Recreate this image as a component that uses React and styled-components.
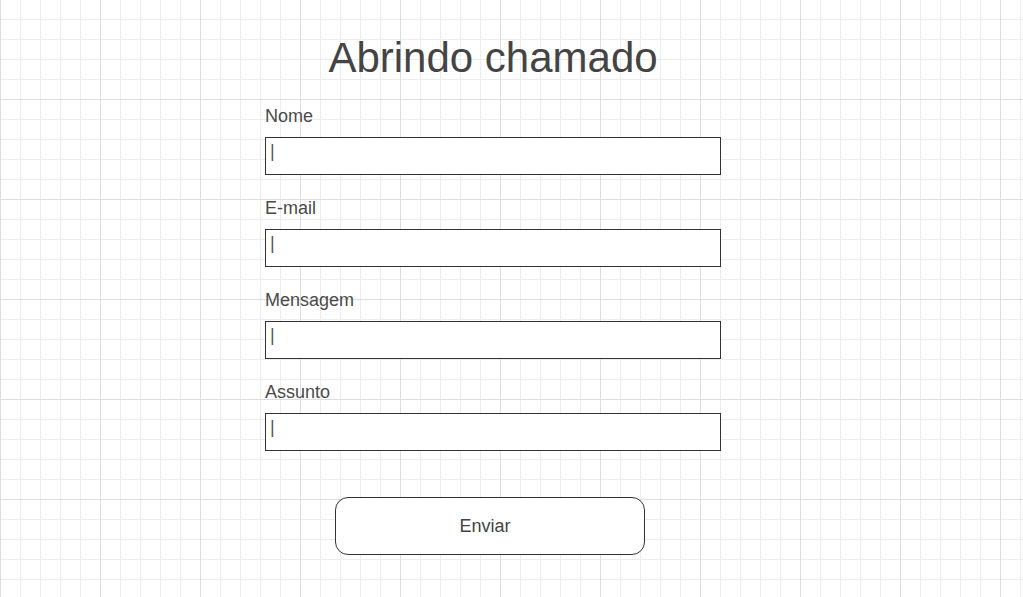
import React from 'react';
import styled, { createGlobalStyle } from 'styled-components';

const GlobalStyle = createGlobalStyle`
  html, body {
    margin: 0;
    padding: 0;
  }
  body {
    font-family: "Liberation Sans", Arial, sans-serif;
    color: #444;
    background-color: #fff;
    background-image:
      linear-gradient(to right, #dedede 1px, transparent 1px),
      linear-gradient(to bottom, #dedede 1px, transparent 1px),
      linear-gradient(to right, #ededed 1px, transparent 1px),
      linear-gradient(to bottom, #ededed 1px, transparent 1px);
    background-size: 100px 100px, 100px 100px, 20px 20px, 20px 20px;
    background-position: 0 -1px;
  }
`

const Page = styled.main`
  min-height: 597px;
  box-sizing: border-box;
  padding: 34px 0 0 265px;
`

const Form = styled.form`
  width: 456px;
  display: flex;
  flex-direction: column;
  gap: 23px;
`

const Title = styled.h1`
  margin: 0 0 1px;
  font-size: 42px;
  line-height: 48px;
  font-weight: 400;
  text-align: center;
`

const Field = styled.div`
  display: flex;
  flex-direction: column;
  gap: 11px;
`

const Label = styled.label`
  font-size: 18px;
  line-height: 20px;
  color: #4a4a4a;
`

const Input = styled.input`
  box-sizing: border-box;
  width: 100%;
  height: 38px;
  margin: 0;
  padding: 0 4px 10px;
  border: 1px solid #333;
  border-radius: 0;
  background: #fff;
  font-family: inherit;
  font-size: 18px;
  color: #555;
  outline: none;
`

const SubmitButton = styled.button`
  align-self: flex-start;
  margin: 23px 0 0 70px;
  width: 310px;
  height: 58px;
  padding: 0 10px 0 0;
  border: 1px solid #333;
  border-radius: 13px;
  background: #fff;
  font-family: inherit;
  font-size: 18px;
  color: #444;
`

const fields = [
  { id: 'nome', label: 'Nome' },
  { id: 'email', label: 'E-mail' },
  { id: 'mensagem', label: 'Mensagem' },
  { id: 'assunto', label: 'Assunto' },
]

export default function App() {
  return (
    <>
      <GlobalStyle />
      <Page>
        <Form name="abrir-chamado" onSubmit={e => e.preventDefault()}>
          <Title>Abrindo chamado</Title>
          {fields.map(f => (
            <Field key={f.id}>
              <Label htmlFor={f.id}>{f.label}</Label>
              <Input id={f.id} type="text" defaultValue="|" />
            </Field>
          ))}
          <SubmitButton type="submit">Enviar</SubmitButton>
        </Form>
      </Page>
    </>
  )
}
